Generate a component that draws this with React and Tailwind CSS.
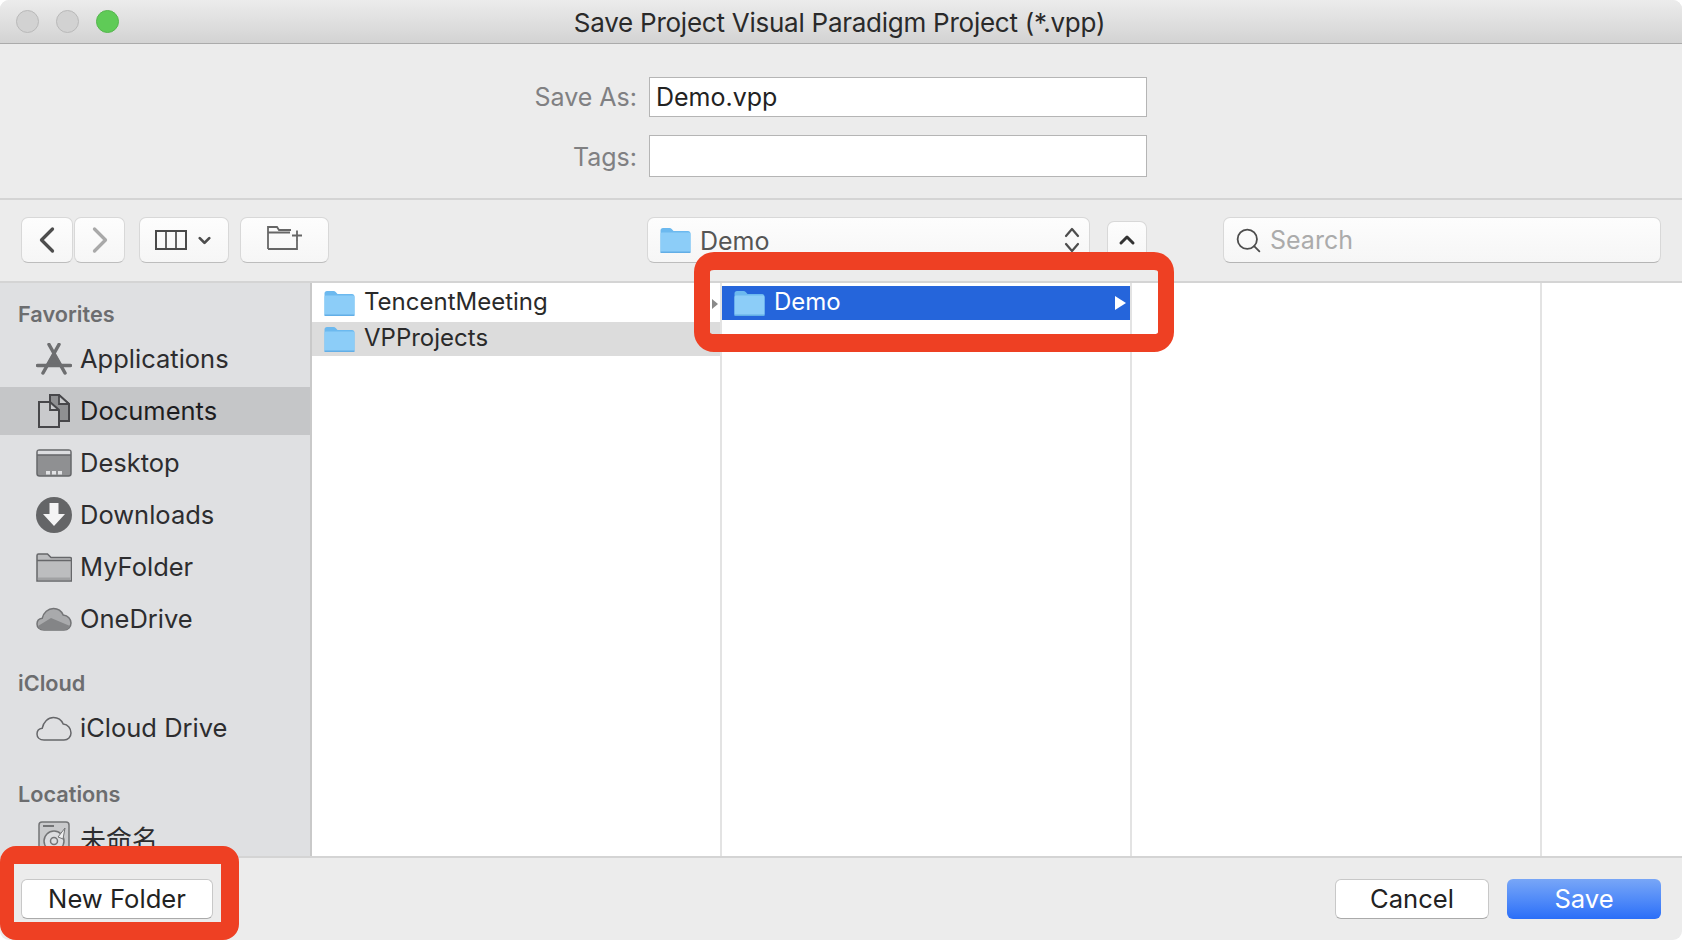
import { ChevronLeft, ChevronRight, ChevronDown, ChevronUp, Search } from "lucide-react";

const Folder = ({ className }) => (
  <svg viewBox="0 0 30 25" className={className}>
    <path d="M0 2.500C0 1 1 0 2.500 0H9c1 0 1.600.4 2.200 1L13 3h14.500C29 3 30 4 30 5.500V23c0 1.200-.8 2-2 2H2c-1.200 0-2-.8-2-2Z" fill="#6cb9ef" />
    <path d="M0 6c0-1 .8-1.600 1.800-1.600h26.400C29.200 4.400 30 5 30 6v17c0 1.200-.8 2-2 2H2c-1.200 0-2-.8-2-2Z" fill="#8ccdf8" />
    <rect x="0" y="23.500" width="30" height="1.500" fill="#62aee6" />
  </svg>
);

const AppsIcon = () => (
  <svg viewBox="0 0 36 33" className="w-[36px] h-[33px]">
    <path d="M18 8 9 24h18Z" fill="#6d6e70" />
    <path d="M13 1.500 29 30M23 1.500 7 30" stroke="#6d6e70" strokeWidth="3.500" strokeLinecap="round" />
    <path d="M1.500 22.500h33" stroke="#6d6e70" strokeWidth="3.500" strokeLinecap="round" />
  </svg>
);

const DocumentsIcon = () => (
  <svg viewBox="0 0 32 34" className="w-[32px] h-[34px]">
    <path d="M12 1h9l10 9v17H12Z" fill="#8f9092" stroke="#47474a" strokeWidth="2" />
    <path d="M21 1v9h10Z" fill="#c9cacc" stroke="#47474a" strokeWidth="1.800" />
    <path d="M1 8h11l9 8v17H1Z" fill="#c9cacc" stroke="#47474a" strokeWidth="2" />
    <path d="M12 8v8h9" fill="none" stroke="#47474a" strokeWidth="1.800" />
  </svg>
);

const DesktopIcon = () => (
  <svg viewBox="0 0 36 28" className="w-[36px] h-[28px]">
    <rect x="1" y="1" width="34" height="26" rx="2.500" fill="#8f9092" stroke="#66676a" strokeWidth="1.500" />
    <rect x="1.800" y="1.800" width="32.400" height="4" fill="#dcdde0" />
    <path d="M1 6h34" stroke="#66676a" strokeWidth="1.500" />
    <rect x="10" y="22" width="4" height="3.500" fill="#e2e3e5" />
    <rect x="16" y="22" width="4" height="3.500" fill="#e2e3e5" />
    <rect x="22" y="22" width="4" height="3.500" fill="#e2e3e5" />
  </svg>
);

const DownloadsIcon = () => (
  <svg viewBox="0 0 36 36" className="w-[36px] h-[36px]">
    <circle cx="18" cy="18" r="18" fill="#646567" />
    <path d="M13.500 6h9v11h6.500L18 29 7 17h6.500Z" fill="#f4f4f5" />
  </svg>
);

const FolderIcon = () => (
  <svg viewBox="0 0 36 29" className="w-[36px] h-[29px]">
    <path d="M1 2.500C1 1.500 1.500 1 2.500 1h9l3.500 3.500h19c1 0 1.500.5 1.500 1.500v22H1Z" fill="#bcbdbf" stroke="#66676a" strokeWidth="1.500" />
    <path d="M1 7.500h34" stroke="#66676a" strokeWidth="1.500" />
    <rect x="1.800" y="24.500" width="32.400" height="2.700" fill="#a0a1a3" />
  </svg>
);

const OneDriveIcon = () => (
  <svg viewBox="0 0 36 24" className="w-[36px] h-[24px]">
    <path d="M8 23C3.500 23 1 20.300 1 17c0-3 2-5.300 5.200-5.700C7.500 5.500 12 1.500 17.500 1.500c4.500 0 8 2.500 9.700 6.500C32 8.500 35 12 35 16c0 4-3 7-7 7Z" fill="#a9aaac" stroke="#737476" strokeWidth="1.500" />
    <path d="M2 19 15 11l19 8c-1 2.500-3 4-6 4H8c-3 0-5-1.500-6-4Z" fill="#848587" />
  </svg>
);

const CloudIcon = () => (
  <svg viewBox="0 0 36 25" className="w-[36px] h-[25px]">
    <path d="M8 24C3.500 24 1 21.300 1 18c0-3 2-5.300 5.200-5.700C7.500 6 12 1.500 17.500 1.500c4.500 0 8 2.500 9.700 6.500C32 8.500 35 12.500 35 17c0 4-3 7-7 7Z" fill="none" stroke="#66676a" strokeWidth="1.500" />
  </svg>
);

const DiskIcon = () => (
  <svg viewBox="0 0 32 36" className="w-[32px] h-[36px]">
    <rect x="1" y="1" width="30" height="34" rx="3" fill="#c9cacc" stroke="#737476" strokeWidth="1.500" />
    <path d="M5 5h11" stroke="#737476" strokeWidth="2" />
    <circle cx="16" cy="20" r="10" fill="#dcdde0" stroke="#737476" strokeWidth="1.500" />
    <circle cx="16" cy="20" r="3.500" fill="none" stroke="#737476" strokeWidth="1.500" />
    <path d="M20 16 27 7l-2 11Z" fill="#eeeeef" stroke="#737476" strokeWidth="1" />
  </svg>
);

const SidebarRow = ({ icon, label, selected, cjk }) => (
  <div className="h-[52px] py-[2px]">
    <div className={`h-full flex items-center ${selected ? "bg-[#c5c6c8]" : ""}`}>
      <div className="w-[36px] ml-[36px] flex justify-center shrink-0">{icon}</div>
      <span className={`ml-[8px] mt-[1px] ${cjk ? "text-[26px]" : "text-[25.500px]"} ${selected ? "text-[#1d1d1f]" : "text-[#2d2d2f]"}`}>{label}</span>
    </div>
  </div>
);

const SidebarHeader = ({ label, className }) => (
  <div className={`h-[38px] flex items-center pl-[18px] pt-[1px] text-[21.700px] font-semibold text-[#6c6d6f] ${className}`}>{label}</div>
);

const ToolButton = ({ className, children }) => (
  <div className={`h-[46px] flex items-center justify-center shrink-0 rounded-[7px] bg-gradient-to-b from-[#fdfdfd] to-[#f6f6f6] border border-[#d8d8d8] border-b-[#bdbdbd] ${className}`}>
    {children}
  </div>
);

const FooterButton = ({ className, children }) => (
  <div className={`h-[40px] flex items-center justify-center rounded-[6px] text-[25.600px] ${className}`}>{children}</div>
);

export default function App() {
  return (
    <div className="relative w-[1682px] h-[940px] flex flex-col overflow-hidden rounded-[9px] bg-[#ececec] font-[Inter,'Noto_Sans_CJK_SC',sans-serif]">
      {/* title bar */}
      <div className="relative h-[44px] shrink-0 flex items-center justify-center bg-gradient-to-b from-[#ececec] to-[#d3d3d3] border-b border-[#ababab]">
        <div className="absolute left-[16px] top-[10px] flex gap-[17px]">
          <div className="w-[23px] h-[23px] rounded-full bg-[#d2d2d2] border border-[#b9b9b9]" />
          <div className="w-[23px] h-[23px] rounded-full bg-[#d2d2d2] border border-[#b9b9b9]" />
          <div className="w-[23px] h-[23px] rounded-full bg-[#5fcb57] border border-[#55b64e]" />
        </div>
        <span className="text-[26px] text-[#2a2a2a] tracking-[-0.25px] mt-[2px] -ml-[3px]">Save Project Visual Paradigm Project (*.vpp)</span>
      </div>

      {/* name and tags */}
      <div className="h-[156px] shrink-0 pt-[33px] border-b-2 border-[#d4d4d4] flex flex-col gap-[18px]">
        <div className="flex items-center">
          <label className="w-[637px] text-right text-[25px] text-[#808082] mt-[2px]">Save As:</label>
          <input readOnly value="Demo.vpp" className="ml-[12px] w-[498px] h-[40px] pl-[6px] bg-white border border-[#b5b5b5] text-[25px] text-[#222] outline-none" />
        </div>
        <div className="flex items-center">
          <label className="w-[637px] text-right text-[25px] text-[#808082] mt-[4px]">Tags:</label>
          <input readOnly className="ml-[12px] w-[498px] h-[42px] bg-white border border-[#b5b5b5] outline-none" />
        </div>
      </div>

      {/* toolbar */}
      <div className="h-[83px] shrink-0 flex items-start pt-[17px] pl-[21px] border-b-2 border-[#d4d4d4]">
        <ToolButton className="w-[52px]">
          <ChevronLeft className="w-[44px] h-[44px] shrink-0 text-[#4d4d4d]" strokeWidth={1.800} />
        </ToolButton>
        <ToolButton className="w-[51px] ml-[1px]">
          <ChevronRight className="w-[44px] h-[44px] shrink-0 text-[#a9a9a9]" strokeWidth={1.800} />
        </ToolButton>
        <ToolButton className="w-[90px] ml-[14px] gap-[8px]">
          <svg viewBox="0 0 32 20" className="w-[32px] h-[20px]">
            <rect x="1" y="1" width="30" height="18" fill="none" stroke="#4a4a4a" strokeWidth="2" />
            <path d="M11 1v18M21 1v18" stroke="#4a4a4a" strokeWidth="1.700" />
          </svg>
          <ChevronDown className="w-[19px] h-[19px] text-[#4d4d4d]" strokeWidth={3.500} />
        </ToolButton>
        <ToolButton className="w-[89px] ml-[11px]">
          <svg viewBox="0 0 36 24" className="w-[36px] h-[24px] mb-[5px]">
            <path d="M1 23V1h9l2 3h12M1 6.500h22M30 14v9H1" fill="none" stroke="#666" strokeWidth="1.800" />
            <path d="M30 4.500v10M25 9.500h10" stroke="#666" strokeWidth="1.800" />
          </svg>
        </ToolButton>

        <ToolButton className="w-[443px] ml-[318px] !justify-start pl-[12px]">
          <Folder className="w-[31px] h-[25px]" />
          <span className="ml-[9px] mt-[4px] text-[25px] text-[#555]">Demo</span>
          <svg viewBox="0 0 16 26" className="w-[16px] h-[26px] ml-auto mr-[9px]">
            <path d="M2 9l6-7 6 7M2 17l6 7 6-7" fill="none" stroke="#4d4d4d" strokeWidth="2.200" strokeLinecap="round" strokeLinejoin="round" />
          </svg>
        </ToolButton>
        <ToolButton className="w-[40px] ml-[17px] !h-[42px] mt-[4px]">
          <ChevronUp className="w-[24px] h-[24px] text-[#333] mb-[4px]" strokeWidth={3} />
        </ToolButton>

        <div className="w-[438px] h-[46px] ml-[76px] flex items-center pl-[10px] rounded-[7px] bg-gradient-to-b from-[#fdfdfd] to-[#f6f6f6] border border-[#d8d8d8] border-b-[#b5b5b5]">
          <Search className="w-[29px] h-[29px] text-[#4d4d4d]" strokeWidth={1.500} />
          <input readOnly placeholder="Search" className="ml-[7px] pt-[2px] flex-1 bg-transparent text-[25px] placeholder:text-[#ababab] outline-none" />
        </div>
      </div>

      {/* browser */}
      <div className="flex-1 min-h-0 flex">
        <div className="w-[312px] shrink-0 bg-[#dfe0e2] border-r-2 border-[#c9c9c9] overflow-hidden pt-[12px]">
          <SidebarHeader label="Favorites" />
          <SidebarRow icon={<AppsIcon />} label="Applications" />
          <SidebarRow icon={<DocumentsIcon />} label="Documents" selected />
          <SidebarRow icon={<DesktopIcon />} label="Desktop" />
          <SidebarRow icon={<DownloadsIcon />} label="Downloads" />
          <SidebarRow icon={<FolderIcon />} label="MyFolder" />
          <SidebarRow icon={<OneDriveIcon />} label="OneDrive" />
          <SidebarHeader label="iCloud" className="mt-[19px]" />
          <SidebarRow icon={<CloudIcon />} label="iCloud Drive" />
          <SidebarHeader label="Locations" className="mt-[21px]" />
          <SidebarRow icon={<DiskIcon />} label="未命名" cjk />
        </div>

        <div className="flex-1 flex bg-white">
          <div className="w-[410px] shrink-0 border-r-2 border-[#e3e3e3] pt-[3px] flex flex-col gap-[2px]">
            <div className="h-[34px] flex items-center pl-[12px] relative">
              <Folder className="w-[31px] h-[25px]" />
              <span className="ml-[9px] mb-[2px] text-[24px] text-[#2a2a2a]">TencentMeeting</span>
              <div className="absolute right-[2px] top-[13px] w-0 h-0 border-y-[5px] border-y-transparent border-l-[6px] border-l-[#8a8a8a]" />
            </div>
            <div className="h-[34px] flex items-center pl-[12px] bg-[#dcdcdc]">
              <Folder className="w-[31px] h-[25px]" />
              <span className="ml-[9px] mb-[2px] text-[24px] text-[#2a2a2a]">VPProjects</span>
            </div>
          </div>
          <div className="w-[410px] shrink-0 border-r-2 border-[#e3e3e3] pt-[3px]">
            <div className="h-[34px] flex items-center pl-[12px] pr-[4px] bg-[#2565db]">
              <Folder className="w-[31px] h-[25px]" />
              <span className="ml-[9px] mb-[2px] text-[24px] text-white">Demo</span>
              <div className="ml-auto w-0 h-0 border-y-[7px] border-y-transparent border-l-[11px] border-l-white" />
            </div>
          </div>
          <div className="w-[410px] shrink-0 border-r-2 border-[#e3e3e3]" />
          <div className="flex-1" />
        </div>
      </div>

      {/* bottom buttons */}
      <div className="h-[84px] shrink-0 border-t-2 border-[#d4d4d4] flex items-start justify-between pt-[21px] pl-[21px] pr-[21px]">
        <FooterButton className="w-[192px] bg-white border border-[#c8c8c8] border-b-[#aaa] text-[#222]">New Folder</FooterButton>
        <div className="flex gap-[18px]">
          <FooterButton className="w-[154px] bg-white border border-[#c8c8c8] border-b-[#aaa] text-[#222]">Cancel</FooterButton>
          <FooterButton className="w-[154px] bg-gradient-to-b from-[#78a6f7] to-[#2a6ef8] text-white">Save</FooterButton>
        </div>
      </div>

      {/* red annotation boxes */}
      <div className="absolute left-[694px] top-[252px] w-[480px] h-[100px] border-x-[16px] border-y-[18px] border-[#ee4023] rounded-[20px]" />
      <div className="absolute left-0 top-[846px] w-[239px] h-[94px] border-y-[18px] border-r-[18px] border-l-[14px] border-[#ee4023] rounded-[16px]" />
    </div>
  );
}
